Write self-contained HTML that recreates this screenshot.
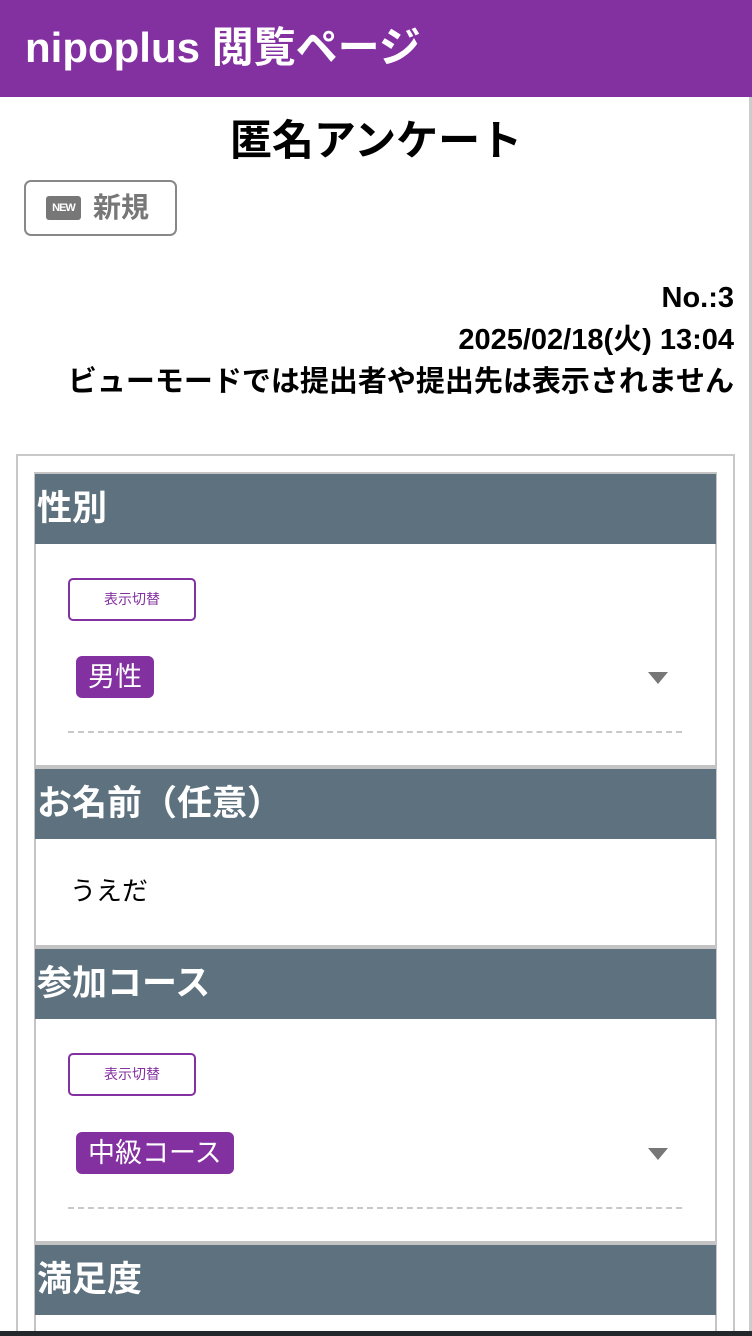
<!DOCTYPE html>
<html style="width:752px;height:1336px;overflow:hidden"><head><meta charset="utf-8"><style>
*{margin:0;padding:0;box-sizing:border-box}
body{width:752px;height:1336px;position:relative;overflow:hidden;background:#fff;font-family:"Liberation Sans","Noto Sans CJK JP",sans-serif}
.a{position:absolute}
.hdr{background:#5d717e;color:#fff;font-size:35px;font-weight:bold;padding-left:2px;height:70px;line-height:70px;left:35px;width:681px;white-space:nowrap}
.sep{background:#c4c4c4;height:4px;left:35px;width:681px}
.btn{border:2px solid #8331a0;border-radius:5px;width:128px;height:43px;color:#8331a0;font-size:14px;text-align:center;line-height:39px;left:68px}
.tag{background:#8331a0;color:#fff;font-size:27px;border-radius:6px;height:42px;line-height:42px;padding:0 12px;left:76px;white-space:nowrap}
.tri{left:648px;width:0;height:0;border-left:10px solid transparent;border-right:10px solid transparent;border-top:12px solid #777}
.dash{left:68px;width:614px;border-top:2px dashed #c8c8c8}
.r{right:18px;font-size:29px;font-weight:bold;text-align:right;white-space:nowrap}
</style></head><body>
<div class="a" style="left:0;top:0;width:752px;height:97px;background:#8331a0"></div>
<div class="a" style="left:25px;top:23px;color:#fff;font-size:42px;font-weight:bold;line-height:50px;white-space:nowrap">nipoplus 閲覧ページ</div>
<div class="a" style="left:749px;top:97px;width:3px;height:1240px;background:#ccc"></div>
<div class="a" style="left:0;top:114px;width:752px;text-align:center;font-size:42px;font-weight:bold;line-height:54px">匿名アンケート</div>
<div class="a" style="left:24px;top:180px;width:153px;height:56px;border:2px solid #888;border-radius:7px"></div>
<div class="a" style="left:46px;top:196px;width:35px;height:24px;background:#777;border-radius:3px;color:#fff;font-size:11px;font-weight:bold;line-height:24px;text-align:center;letter-spacing:-1px">NEW</div>
<div class="a" style="left:93px;top:190px;color:#777;font-size:28px;font-weight:bold;line-height:36px">新規</div>
<div class="a r" style="top:281px;line-height:34px">No.:3</div>
<div class="a r" style="top:323px;line-height:34px">2025/02/18(火) 13:04</div>
<div class="a r" style="top:365px;line-height:34px">ビューモードでは提出者や提出先は表示されません</div>
<div class="a" style="left:16px;top:454px;width:719px;height:900px;border:2px solid #c8c8c8"></div>
<div class="a" style="left:34px;top:472px;width:683px;height:900px;border:2px solid #c4c4c4"></div>
<div class="a hdr" style="top:474px">性別</div>
<div class="a btn" style="top:578px">表示切替</div>
<div class="a tag" style="top:656px">男性</div>
<div class="a tri" style="top:672px"></div>
<div class="a dash" style="top:731px"></div>
<div class="a sep" style="top:765px"></div>
<div class="a hdr" style="top:769px">お名前（任意）</div>
<div class="a" style="left:70px;top:873px;font-size:26px;line-height:36px">うえだ</div>
<div class="a sep" style="top:945px"></div>
<div class="a hdr" style="top:949px">参加コース</div>
<div class="a btn" style="top:1053px">表示切替</div>
<div class="a tag" style="top:1132px">中級コース</div>
<div class="a tri" style="top:1148px"></div>
<div class="a dash" style="top:1207px"></div>
<div class="a sep" style="top:1241px"></div>
<div class="a hdr" style="top:1245px">満足度</div>
<div class="a" style="left:0;top:1331px;width:752px;height:5px;background:#23282c"></div>
</body></html>
